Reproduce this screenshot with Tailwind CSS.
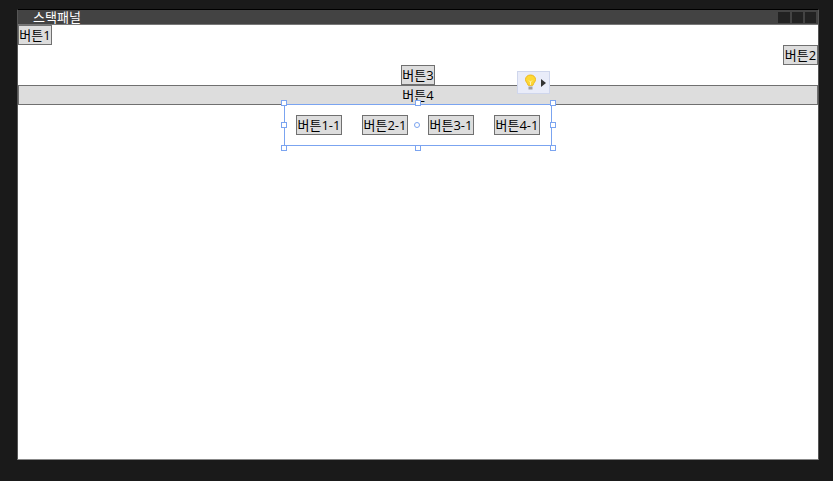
<!DOCTYPE html>
<html lang="ko">
<head>
  <meta charset="UTF-8" />
  <title>스택패널</title>
  <script src="https://cdn.jsdelivr.net/npm/@tailwindcss/browser@4"></script>
</head>
<body class="bg-[#1a1a1a] h-[481px] overflow-hidden font-['Open_Sans','Noto_Sans_CJK_KR',sans-serif] text-[13px] text-black">
  <div class="pt-[9px] pl-[17px]">
    <!-- 디자이너 창 -->
    <div class="w-[802px] h-[451px] flex flex-col border-t border-t-black border-x border-x-[#555] border-b border-b-[#888]">
      <div class="h-[14px] bg-[#434343] flex items-center shrink-0">
        <span class="ml-[15px] text-white leading-[14px]">스택패널</span>
        <div class="ml-auto flex gap-[2px] pr-[2px]">
          <div class="w-[12px] h-[11px] bg-[#222222]"></div>
          <div class="w-[11px] h-[11px] bg-[#222222]"></div>
          <div class="w-[11px] h-[11px] bg-[#222222]"></div>
        </div>
      </div>
      <div class="relative flex-1 flex flex-col bg-white border-t border-t-[#777]">
        <!-- 스택패널 버튼들 -->
        <button class="self-start w-[34px] h-[20px] bg-[#dddddd] border border-[#707070] leading-[18px]">버튼1</button>
        <button class="self-end w-[35px] h-[20px] bg-[#dddddd] border border-[#707070] leading-[18px]">버튼2</button>
        <button class="self-center w-[34px] h-[20px] bg-[#dddddd] border border-[#707070] leading-[18px]">버튼3</button>
        <button class="h-[20px] bg-[#dddddd] border border-[#707070] leading-[18px]">버튼4</button>
        <div class="self-center w-[268px] h-[41px] flex items-start gap-[20px] pl-[12px] pt-[10px]">
          <button class="w-[46px] h-[20px] bg-[#dddddd] border border-[#707070] leading-[18px]">버튼1-1</button>
          <button class="w-[46px] h-[20px] bg-[#dddddd] border border-[#707070] leading-[18px]">버튼2-1</button>
          <button class="w-[46px] h-[20px] bg-[#dddddd] border border-[#707070] leading-[18px]">버튼3-1</button>
          <button class="w-[46px] h-[20px] bg-[#dddddd] border border-[#707070] leading-[18px]">버튼4-1</button>
        </div>

        <!-- 선택 표시 -->
        <div class="absolute left-[266px] top-[79px] w-[268px] h-[42px] border border-[#7ba4f0]"></div>
        <div class="absolute left-[263px] top-[75px] w-[6px] h-[6px] bg-white border border-[#7ba4f0]"></div>
        <div class="absolute left-[397px] top-[75px] w-[6px] h-[6px] bg-white border border-[#7ba4f0]"></div>
        <div class="absolute left-[532px] top-[75px] w-[6px] h-[6px] bg-white border border-[#7ba4f0]"></div>
        <div class="absolute left-[263px] top-[97px] w-[6px] h-[6px] bg-white border border-[#7ba4f0]"></div>
        <div class="absolute left-[532px] top-[97px] w-[6px] h-[6px] bg-white border border-[#7ba4f0]"></div>
        <div class="absolute left-[263px] top-[120px] w-[6px] h-[6px] bg-white border border-[#7ba4f0]"></div>
        <div class="absolute left-[397px] top-[120px] w-[6px] h-[6px] bg-white border border-[#7ba4f0]"></div>
        <div class="absolute left-[532px] top-[120px] w-[6px] h-[6px] bg-white border border-[#7ba4f0]"></div>
        <div class="absolute left-[396px] top-[97px] w-[6px] h-[6px] rounded-full bg-white border border-[#7ba4f0]"></div>

        <!-- 전구 메뉴 -->
        <div class="absolute left-[499px] top-[46px] w-[33px] h-[23px] bg-[#e9ecf9] border border-[#cfd6ec] flex items-center pl-[6px] gap-[4px]">
          <svg width="13" height="17" viewBox="0 0 13 17">
            <path d="M6.500 1C3.500 1 1.500 3 1.500 5.500c0 2.300 2 3.500 2.600 5.800h4.800c.6-2.300 2.600-3.500 2.600-5.800C11.500 3 9.500 1 6.500 1z" fill="#fdd835" stroke="#efb81c" stroke-width="1"/>
            <path d="M5 6.500l1.500 1.500L8 6.500M6.500 8v3" fill="none" stroke="#fff3b0" stroke-width="1"/>
            <path d="M4.500 12.500h4v3h-4z" fill="#a0a0a0"/>
          </svg>
          <svg width="5" height="8" viewBox="0 0 5 8"><path d="M0 0l5 4-5 4z" fill="#333"/></svg>
        </div>
      </div>
    </div>
  </div>
</body>
</html>
